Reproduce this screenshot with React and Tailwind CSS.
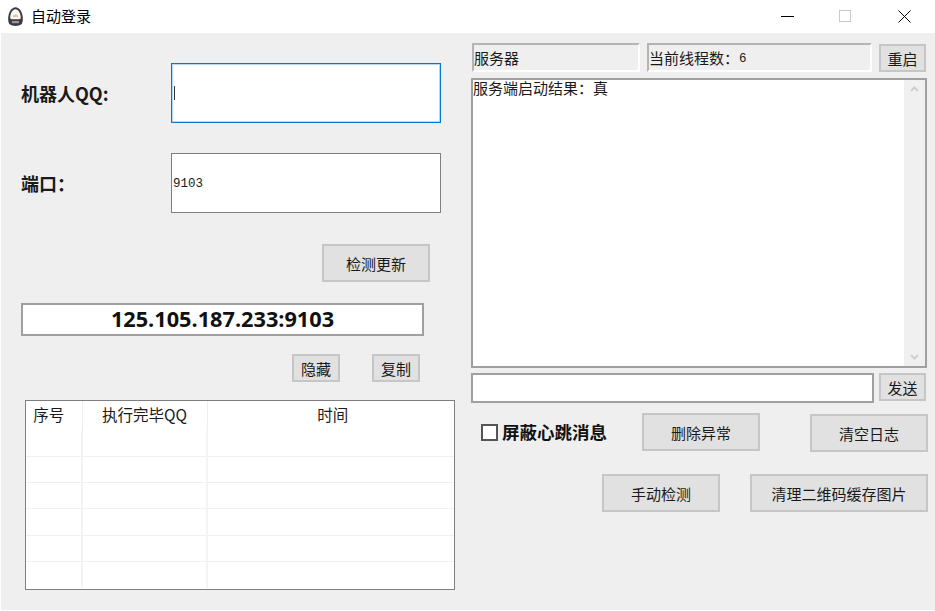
const cjk = "font-['Noto_Sans_CJK_SC','Noto_Sans',sans-serif]";

function Btn({ className, children }) {
  return (
    <button className={`flex items-center justify-center border-2 border-[#c6c6c6] bg-[#e1e1e1] text-[15px] leading-none text-[#1a1a1a] ${className}`}>
      {children}
    </button>
  );
}

function Logo() {
  return (
    <svg width="17" height="21" viewBox="0 0 17 21">
      <path d="M8.500 1.200C4.300 1.200 1.500 6.500 1.200 11.500c-.2 3.500.3 5.500 1.500 6.800 1.300 1.300 3.300 1.700 5.800 1.700s4.500-.4 5.800-1.700c1.200-1.300 1.700-3.300 1.500-6.800C15.500 6.500 12.700 1.200 8.500 1.200Z" fill="#3f3a45" />
      <path d="M8.500 3.200c-2.900 0-5 4-5.300 8-.1 1.300.4 2 1.600 2h7.400c1.200 0 1.700-.7 1.600-2-.3-4-2.400-8-5.300-8Z" fill="#fbfaf8" />
      <path d="M5.800 11c0-1.600 1.200-2.700 2.700-2.700s2.700 1.100 2.700 2.700Z" fill="#f7bf85" />
      <rect x="5" y="15" width="7" height="2.200" fill="#9a959e" />
    </svg>
  );
}

const rows = [0, 1, 2, 3, 4, 5];

export default function App() {
  return (
    <div className={`flex h-[611px] w-[935px] flex-col overflow-hidden bg-white text-[#1a1a1a] ${cjk}`}>
      {/* Title bar */}
      <div className="flex h-[33px] shrink-0 items-center bg-white">
        <div className="ml-[7px] mr-[7px] flex w-[17px] items-center"><Logo /></div>
        <span className="text-[15px] text-black">自动登录</span>
        <div className="ml-auto flex items-center">
          <svg width="13" height="13" viewBox="0 0 13 13" className="mr-[45px]">
            <path d="M0 6.500H13" stroke="#000000" strokeWidth="1" />
          </svg>
          <svg width="13" height="13" viewBox="0 0 13 13" className="mr-[46px]">
            <rect x="0.500" y="0.500" width="11" height="11" fill="none" stroke="#c8c8c8" strokeWidth="1" />
          </svg>
          <svg width="13" height="13" viewBox="0 0 13 13" className="mr-[24px]">
            <path d="M0.500 0.500L12.500 12.500M12.500 0.500L0.500 12.500" stroke="#000000" strokeWidth="1" fill="none" />
          </svg>
        </div>
      </div>

      {/* Window body */}
      <div className="ml-px flex h-[577px] bg-[#efefef]">
        {/* Left column */}
        <div className="w-[470px] shrink-0 pl-[20px]">
          <div className="mt-[30px] flex h-[60px] items-center">
            <label className="w-[150px] text-[18px] font-bold">机器人QQ:</label>
            <div className="flex h-full w-[270px] items-center border border-[#0078d7] bg-white pl-[2px] outline outline-[#0078d7]/30 -outline-offset-2">
              <span className="h-[14px] w-px bg-[#333333]" />
            </div>
          </div>
          <div className="mt-[30px] flex h-[60px] items-center">
            <label className="w-[150px] text-[18px] font-bold">端口：</label>
            <div className="flex h-full w-[270px] items-center border border-[#7f7f7f] bg-white pl-px pt-[2px] font-['Liberation_Mono',monospace] text-[12.500px]">
              9103
            </div>
          </div>
          <Btn className="ml-[301px] mt-[31px] h-[38px] w-[108px]">检测更新</Btn>
          <div className="mt-[21px] flex h-[33px] w-[403px] items-center justify-center border-2 border-[#a0a0a0] bg-white font-['Open_Sans',sans-serif] text-[21.700px] font-bold text-[#111111]">
            125.105.187.233:9103
          </div>
          <div className="ml-[271px] mt-[18px] flex gap-[32px]">
            <Btn className="h-[28px] w-[48px]">隐藏</Btn>
            <Btn className="h-[28px] w-[48px]">复制</Btn>
          </div>
          {/* Result table */}
          <div className="ml-[4px] mt-[18px] h-[190px] w-[430px] overflow-hidden border border-[#7f7f7f] bg-white">
            <table className="w-full table-fixed border-collapse">
              <thead>
                <tr className="h-[29px] text-[15.500px]">
                  <th className="w-[56px] border-r border-[#eeeeee] pb-[2px] pr-[10px] font-normal">序号</th>
                  <th className="w-[125px] border-r border-[#eeeeee] pb-[2px] font-normal">执行完毕QQ</th>
                  <th className="pb-[2px] pl-[4px] font-normal">时间</th>
                </tr>
              </thead>
              <tbody>
                {rows.map((r) => (
                  <tr key={r} className="h-[26.300px] border-b border-[#f0f0f0] last:border-b-0">
                    <td className="border-r-2 border-[#f3f3f3]" />
                    <td className="border-r-2 border-[#f3f3f3]" />
                    <td />
                  </tr>
                ))}
              </tbody>
            </table>
          </div>
        </div>

        {/* Right column */}
        <div className="w-[464px] shrink-0 text-[15px]">
          <div className="mt-[10px] flex h-[29px]">
            <div className="ml-px flex w-[168px] items-center border-2 border-[#b4b4b4] border-b-white border-r-white text-[15px] leading-none">服务器</div>
            <div className="ml-[7px] flex w-[225px] items-center border-2 border-[#b4b4b4] border-b-white border-r-white leading-none">
              当前线程数：<span className="pt-[3px] font-['Liberation_Mono',monospace] text-[12.500px]">6</span>
            </div>
            <Btn className="ml-[7px] h-[28px] w-[47px] self-end">重启</Btn>
          </div>
          <div className="mt-[6px] flex h-[290px] w-[456px] border-2 border-[#a0a0a0] bg-white">
            <p className="flex-1 text-[15px] leading-[15px]">服务端启动结果：真</p>
            <div className="flex w-[21px] flex-col items-center justify-between bg-[#f0f0f0] py-[6px]">
              <svg width="9" height="6" viewBox="0 0 9 6">
                <path d="M1 5L4.500 1.500L8 5" fill="none" stroke="#cfcfcf" strokeWidth="2" />
              </svg>
              <svg width="9" height="6" viewBox="0 0 9 6">
                <path d="M1 1L4.500 4.500L8 1" fill="none" stroke="#cfcfcf" strokeWidth="2" />
              </svg>
            </div>
          </div>
          <div className="mt-[5px] flex">
            <div className="h-[30px] w-[403px] border-2 border-[#a0a0a0] bg-white" />
            <Btn className="ml-[5px] h-[28px] w-[47px]">发送</Btn>
          </div>
          <div className="mt-[10px] flex items-start">
            <div className="ml-[10px] flex h-[38px] w-[161px] items-center gap-[4px]">
              <span className="h-[17px] w-[17px] shrink-0 border-2 border-[#555555] bg-white" />
              <span className="whitespace-nowrap text-[17.500px] font-bold text-[#111111]">屏蔽心跳消息</span>
            </div>
            <Btn className="h-[38px] w-[118px]">删除异常</Btn>
            <Btn className="ml-[50px] mt-px h-[38px] w-[118px]">清空日志</Btn>
          </div>
          <div className="mt-[22px] flex">
            <Btn className="ml-[131px] h-[38px] w-[118px]">手动检测</Btn>
            <Btn className="ml-[30px] h-[38px] w-[178px]">清理二维码缓存图片</Btn>
          </div>
        </div>
      </div>
    </div>
  );
}
